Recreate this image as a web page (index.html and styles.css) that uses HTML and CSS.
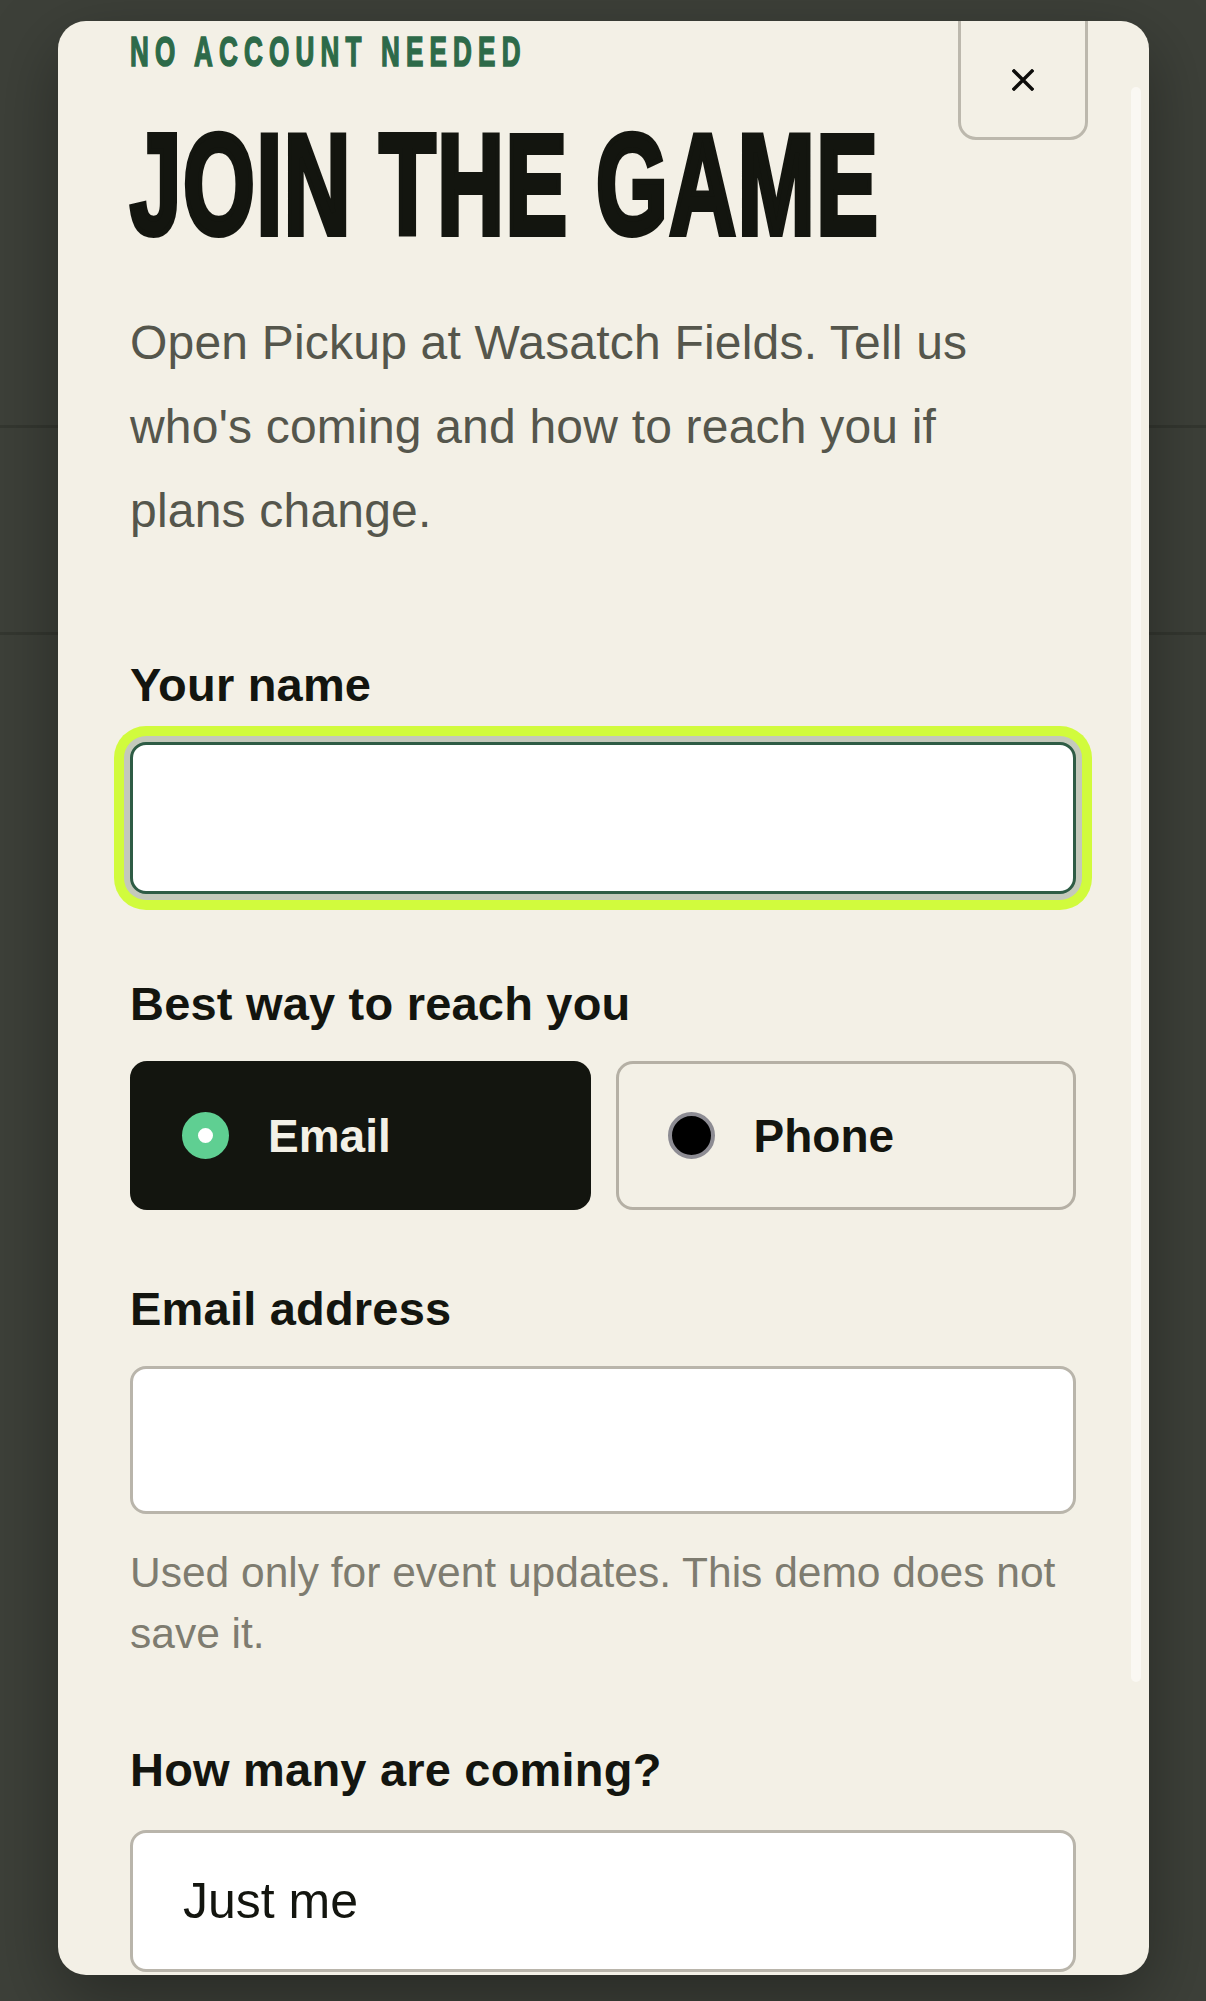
FILE: index.html
```html
<!DOCTYPE html>
<html lang="en">
<head>
  <meta charset="UTF-8" />
  <title>Join the game</title>
  <meta name="viewport" content="width=device-width, initial-scale=1" />
  <link rel="stylesheet" href="styles.css">
</head>
<body>
  <!-- page behind the dialog -->
  <div class="backdrop">
    <div class="backdrop-rule rule-a"></div>
    <div class="backdrop-rule rule-b"></div>
  </div>

  <div class="modal" role="dialog" aria-labelledby="join-title">
    <button class="close" type="button" aria-label="Close">
      <svg width="22" height="22" viewBox="0 0 22 22" aria-hidden="true">
        <path d="M2 2 L20 20 M20 2 L2 20" stroke="#0d0d0b" stroke-width="3.4" stroke-linecap="square"/>
      </svg>
    </button>
    <div class="scrollbar"></div>

    <div class="modal-body">
      <p class="eyebrow"><span>No account needed</span></p>
      <h1 id="join-title" class="title"><span>Join the game</span></h1>
      <p class="intro">Open Pickup at Wasatch Fields. Tell us who's coming and how to reach you if plans change.</p>

      <form class="rsvp">
        <label class="field-label field-name" for="name">Your name</label>
        <input id="name" class="text-input is-focused" type="text" />

        <p class="field-label field-reach">Best way to reach you</p>
        <div class="choice-row">
          <label class="choice is-on">
            <span class="dot"></span>
            <span>Email</span>
          </label>
          <label class="choice">
            <span class="dot"></span>
            <span>Phone</span>
          </label>
        </div>

        <label class="field-label field-email" for="email">Email address</label>
        <input id="email" class="text-input" type="email" />
        <p class="hint">Used only for event updates. This demo does not save it.</p>

        <label class="field-label field-count" for="count">How many are coming?</label>
        <div id="count" class="select-box">Just me</div>
      </form>
    </div>
  </div>
</body>
</html>
```

FILE: styles.css
```css
html,body{margin:0;height:100%}
body{background:#3d4039;font-family:"Liberation Sans",Arial,sans-serif;color:#13150f;overflow:hidden;position:relative}

.backdrop{position:absolute;inset:0}
.backdrop-rule{position:absolute;left:0;right:0;height:3px;background:#343730}
.rule-a{top:425px}
.rule-b{top:632px}

.modal{position:relative;margin:21px 57px 0 58px;height:1954px;background:#f3f0e6;border-radius:28px;overflow:hidden;box-shadow:0 24px 70px rgba(0,0,0,.35)}
.modal-body{padding:10px 73px 0 72px}

.close{position:absolute;top:-22px;left:900px;width:130px;height:141px;padding:20px 0 0;box-sizing:border-box;background:transparent;border:3px solid #bcb8ad;border-radius:18px;display:flex;align-items:center;justify-content:center;cursor:pointer}
.scrollbar{position:absolute;left:1073px;top:66px;width:10px;height:1595px;border-radius:5px;background:#faf8f3}

/* condensed display faces are faked with a horizontal squeeze */
.eyebrow{margin:0;height:42px;font-size:42px;line-height:42px;font-weight:700;text-transform:uppercase;color:#2d6a49;white-space:nowrap}
.eyebrow span{display:inline-block;transform:scaleX(.62);transform-origin:left center;letter-spacing:10px;-webkit-text-stroke:1.6px #2d6a49}
.title{margin:41px 0 0;height:142px;font-size:142px;line-height:142px;font-weight:700;text-transform:uppercase;white-space:nowrap}
.title span{display:inline-block;transform:scaleX(.65);transform-origin:left center;-webkit-text-stroke:6px #13150f;letter-spacing:2.5px}

.intro{margin:45px 0 0;max-width:900px;font-size:48px;line-height:84px;letter-spacing:.2px;color:#55564c}

.rsvp{display:flex;flex-direction:column}
.field-label{display:block;margin:0 0 29px;font-size:47px;line-height:56px;font-weight:700;letter-spacing:.2px}
.field-name{margin-top:104px}
.field-reach{margin-top:82px}
.field-email{margin-top:71px}
.field-count{margin-top:78px}

.text-input{display:block;box-sizing:border-box;width:100%;height:148px;margin:0;background:#fff;border:3px solid #b9b5ab;border-radius:16px;font:inherit;outline:none}
.text-input.is-focused{height:152px;border-color:#2e5c45;box-shadow:0 0 0 6px #c4c9bb,0 0 0 16px #d1fb3d}

.choice-row{display:grid;grid-template-columns:1fr 1fr;gap:25px}
.choice{display:flex;align-items:center;gap:39px;box-sizing:border-box;height:149px;padding:0 0 0 49px;border:3px solid #b5b0a5;border-radius:17px;font-size:46px;font-weight:700;color:#13150f}
.choice .dot{box-sizing:border-box;width:47px;height:47px;border-radius:50%;background:#000;border:4px solid #8d8c93}
.choice.is-on{background:#13150f;border-color:#13150f;color:#f3f0e6}
.choice.is-on .dot{background:#fff;border:16px solid #5fcf92}

.hint{margin:28px 0 0;font-size:42.5px;line-height:61px;color:#7e7c70}

.select-box{box-sizing:border-box;height:142px;margin-top:3px;padding:0 0 0 50px;display:flex;align-items:center;background:#fff;border:3px solid #b9b5ab;border-radius:16px;font-size:50px;color:#13150f}
```
